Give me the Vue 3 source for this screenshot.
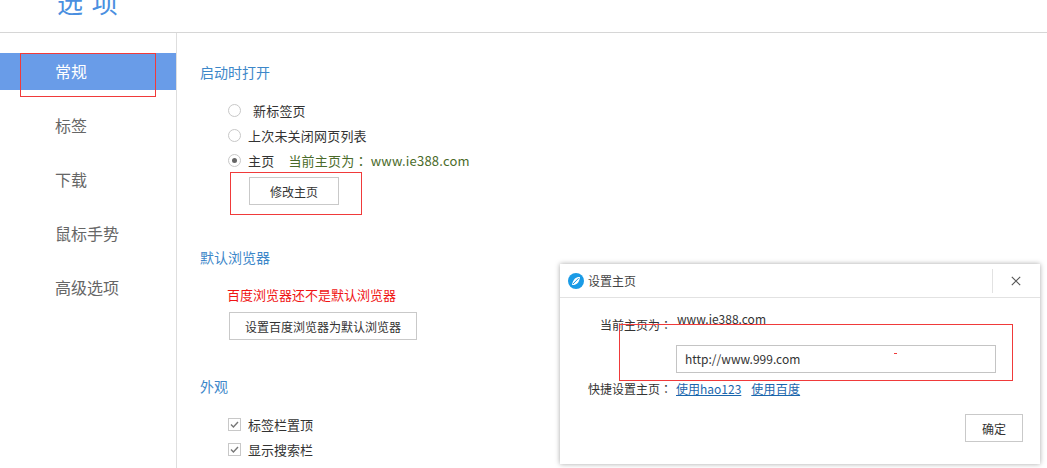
<script setup>
const navItems = ['常规', '标签', '下载', '鼠标手势', '高级选项']
</script>

<template>
  <div class="page">
    <header class="head"><h1 class="title">选 项</h1></header>
    <div class="body">
      <nav class="side">
        <div v-for="(n, i) in navItems" :key="n" class="nav" :class="{ on: i === 0 }">{{ n }}</div>
      </nav>
      <main class="main">
        <section class="sec sec1">
          <h2 class="sec-title">启动时打开</h2>
          <div class="opts">
            <label class="opt"><i class="radio"></i><span class="gap">新标签页</span></label>
            <label class="opt"><i class="radio"></i><span>上次未关闭网页列表</span></label>
            <label class="opt"><i class="radio sel"></i><span>主页</span><span class="cur">当前主页为<span class="colon">：</span> www.ie388.com</span></label>
          </div>
          <button class="btn edit">修改主页</button>
        </section>
        <section class="sec sec2">
          <h2 class="sec-title">默认浏览器</h2>
          <p class="warn">百度浏览器还不是默认浏览器</p>
          <button class="btn def">设置百度浏览器为默认浏览器</button>
        </section>
        <section class="sec sec3">
          <h2 class="sec-title">外观</h2>
          <div class="checks">
            <label class="opt"><i class="check"><svg width="11" height="11" viewBox="0 0 11 11"><path d="M2 5.6 4.4 8 9 3" fill="none" stroke="#777" stroke-width="1.4"/></svg></i><span>标签栏置顶</span></label>
            <label class="opt"><i class="check"><svg width="11" height="11" viewBox="0 0 11 11"><path d="M2 5.6 4.4 8 9 3" fill="none" stroke="#777" stroke-width="1.4"/></svg></i><span>显示搜索栏</span></label>
          </div>
        </section>
      </main>
    </div>

    <div class="mark m1"></div>
    <div class="mark m2"></div>

    <div class="dialog">
      <div class="d-head">
        <svg class="logo" width="16" height="16" viewBox="0 0 16 16">
          <circle cx="8" cy="8" r="8" fill="#1a9be6"/>
          <path d="M12 4C8.6 3.6 5 5.6 4 12 7.8 12.4 11.2 10.4 12 4Z" fill="#fff"/>
          <path d="M5 11 10.6 5.2" stroke="#1a9be6" stroke-width="1"/>
        </svg>
        <span class="d-title">设置主页</span>
        <div class="d-close">
          <svg width="10" height="10" viewBox="0 0 10 10"><path d="M.8.8 9.2 9.2M9.2.8.8 9.2" stroke="#555" stroke-width="1.1"/></svg>
        </div>
      </div>
      <div class="d-body">
        <div class="row row1"><span class="lab">当前主页为<span class="colon">：</span></span><span class="val">www.ie388.com</span></div>
        <div class="input">http://www.999.com</div>
        <div class="row row3"><span class="lab">快捷设置主页<span class="colon">：</span></span><a class="link">使用hao123</a><a class="link l2">使用百度</a></div>
        <div class="foot"><button class="btn ok">确定</button></div>
      </div>
      <div class="mark m3"><i class="tick"></i></div>
    </div>
  </div>
</template>

<style scoped>
.page {
  position: relative;
  width: 1047px;
  height: 468px;
  overflow: hidden;
  background: #fff;
  font-family: "Noto Sans CJK SC", "Liberation Sans", sans-serif;
  font-size: 13px;
  color: #333;
}
.colon { font-family: "Noto Sans CJK TC", sans-serif; }
.head { height: 32px; border-bottom: 1px solid #d6d6d6; overflow: hidden; }
.title {
  margin: -15px 0 0 57px;
  font-size: 26px;
  line-height: 34px;
  font-weight: 400;
  color: #4a8fe0;
  word-spacing: 3px;
}
.body { display: flex; height: 435px; }
.side { width: 176px; border-right: 1px solid #dedede; padding-top: 20px; flex: none; }
.nav {
  height: 37px;
  line-height: 37px;
  margin-bottom: 17px;
  padding-left: 55px;
  font-size: 16px;
  color: #666;
}
.nav.on { background: #699ce8; color: #fff; }
.main { flex: 1; padding-left: 23px; }
.sec { display: flex; flex-direction: column; align-items: flex-start; }
.sec1 { padding-top: 31px; }
.sec2 { padding-top: 44px; }
.sec3 { padding-top: 37px; }
.sec-title { margin: 0; font-size: 14px; line-height: 18px; font-weight: 400; color: #3d87c9; }
.sec1 .sec-title, .sec2 .sec-title { line-height: 16px; margin-bottom: 2px; }
.opts { margin: 16px 0 0 28px; letter-spacing: .2px; }
.opt { display: flex; align-items: center; height: 25px; color: #333; }
.radio {
  width: 13px; height: 13px; flex: none;
  box-sizing: border-box;
  border: 1px solid #c8c8c8;
  border-radius: 50%;
  margin-right: 7px;
  position: relative;
}
.radio.sel::after {
  content: "";
  position: absolute;
  left: 3px; top: 3px;
  width: 5px; height: 5px;
  border-radius: 50%;
  background: #666;
}
.gap { margin-left: 5px; }
.cur { margin-left: 14px; color: #4a6b2a; }
.btn {
  box-sizing: border-box;
  background: #fff;
  border: 1px solid #c9c9c9;
  font: inherit;
  font-size: 12px;
  color: #333;
  padding: 0;
  border-radius: 0;
}
.edit { width: 90px; height: 28px; margin: 4px 0 0 49px; }
.warn { margin: 19px 0 0 27px; line-height: 18px; color: #f01414; font-size: 13px; }
.def { width: 188px; height: 28px; margin: 8px 0 0 29px; }
.checks { margin: 17px 0 0 28px; }
.check {
  width: 13px; height: 13px; flex: none;
  box-sizing: border-box;
  border: 1px solid #c8c8c8;
  margin-right: 7px;
  display: flex;
  align-items: center;
  justify-content: center;
}
.mark { position: absolute; box-sizing: border-box; border: 1px solid #f03a3a; pointer-events: none; }
.m1 { left: 20px; top: 53px; width: 136px; height: 44px; }
.m2 { left: 230px; top: 172px; width: 132px; height: 43px; }
.m3 { left: 59px; top: 60px; width: 394px; height: 57px; }
.tick { position: absolute; left: 274px; top: 28px; width: 3px; height: 1px; background: #f03a3a; }
.dialog {
  position: absolute;
  left: 560px; top: 264px;
  width: 480px; height: 200px;
  box-sizing: border-box;
  background: #fff;
  box-shadow: 0 0 5px rgba(0, 0, 0, .35);
}
.d-head {
  display: flex; align-items: center;
  height: 33px;
  border-bottom: 1px solid #e2e2e2;
  padding-left: 8px;
}
.logo { flex: none; margin-right: 4px; }
.d-title { font-size: 12px; color: #444; }
.d-close {
  margin-left: auto;
  width: 45px; height: 24px;
  border-left: 1px solid #e2e2e2;
  display: flex; align-items: center; justify-content: center;
  margin-right: 2px;
}
.d-body { position: relative; font-size: 12px; }
.row { display: flex; }
.lab { width: 112px; text-align: right; flex: none; color: #333; }
.row1 { padding-top: 18px; height: 17px; line-height: 17px; }
.row1 .val { margin: -6px 0 0 5px; }
.input {
  box-sizing: border-box;
  width: 320px; height: 28px;
  margin: 12px 0 0 116px;
  border: 1px solid #c4c4c4;
  padding-left: 8px;
  line-height: 26px;
  color: #333;
}
.row3 { margin-top: 7px; line-height: 17px; }
.link { color: #1a66ad; text-decoration: underline; margin-left: 4px; margin-right: 5px; }
.l2 { margin-left: 5px; letter-spacing: .2px; }
.foot { display: flex; justify-content: flex-end; padding: 17px 17px 0 0; }
.ok { width: 58px; height: 28px; }
</style>
